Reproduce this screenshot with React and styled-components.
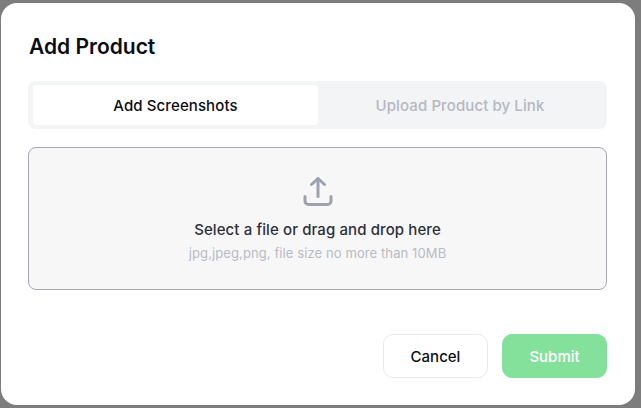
import React, { useState } from "react";
import styled, { createGlobalStyle } from "styled-components";

const GlobalStyle = createGlobalStyle`
  html, body {
    margin: 0;
    padding: 0;
    overflow: hidden;
  }
  * {
    box-sizing: border-box;
  }
`;

const Overlay = styled.div`
  width: 641px;
  height: 408px;
  background: #7d7d7d;
  padding: 3px 6px 3px 1px;
  font-family: Inter, "Liberation Sans", sans-serif;
`;

const Modal = styled.div`
  width: 634px;
  height: 402px;
  background: #fff;
  border-radius: 16px;
  padding: 30px 28px 27px 27px;
  display: flex;
  flex-direction: column;
`;

const Title = styled.h2`
  margin: 0 0 20px 1px;
  font-size: 21px;
  line-height: 28px;
  font-weight: 600;
  color: #0b0d14;
`;

const Tabs = styled.div`
  display: grid;
  grid-template-columns: 285px 1fr;
  height: 48px;
  padding: 4px 5px;
  background: #f3f4f6;
  border-radius: 8px;
`;

const Tab = styled.button`
  border: 0;
  border-radius: 4px;
  font-family: inherit;
  font-size: 15px;
  letter-spacing: 0.1px;
  font-weight: 450;
  background: ${(p) => (p.$active ? "#fff" : "transparent")};
  color: ${(p) => (p.$active ? "#0b0d14" : "#b4b8c2")};
  cursor: pointer;
`;

const DropZone = styled.div`
  margin-top: 18px;
  height: 143px;
  background: #f7f7f8;
  border: 1px solid #a5a7b5;
  border-radius: 8px;
  display: flex;
  flex-direction: column;
  align-items: center;
  padding-top: 27px;
`;

const UploadIcon = styled.svg`
  width: 32px;
  height: 32px;
  color: #9ca3af;
`;

const DropTitle = styled.div`
  margin-top: 13px;
  font-size: 15px;
  letter-spacing: 0.1px;
  line-height: 20px;
  font-weight: 450;
  color: #2d303b;
`;

const DropHint = styled.div`
  margin-top: 5px;
  font-size: 13px;
  letter-spacing: 0.1px;
  line-height: 16px;
  color: #b8bbc4;
`;

const Footer = styled.div`
  margin-top: auto;
  display: flex;
  justify-content: flex-end;
  gap: 14px;
`;

const Button = styled.button`
  width: 105px;
  height: 44px;
  border-radius: 10px;
  font-family: inherit;
  font-size: 15px;
  font-weight: 450;
  cursor: pointer;
  border: 1px solid ${(p) => (p.$primary ? "#84e19b" : "#e8e9ec")};
  background: ${(p) => (p.$primary ? "#84e19b" : "#fff")};
  color: ${(p) => (p.$primary ? "#fff" : "#0b0d14")};
`;

export default function App() {
  const [tab, setTab] = useState("screenshots");

  return (
    <Overlay>
      <GlobalStyle />
      <Modal>
        <Title>Add Product</Title>
        <Tabs>
          <Tab $active={tab === "screenshots"} onClick={() => setTab("screenshots")}>
            Add Screenshots
          </Tab>
          <Tab $active={tab === "link"} onClick={() => setTab("link")}>
            Upload Product by Link
          </Tab>
        </Tabs>
        <DropZone>
          <UploadIcon viewBox="0 0 32 32" fill="none" stroke="currentColor" strokeWidth="3" strokeLinecap="round" strokeLinejoin="round">
            <path d="M16 21.5V3.5" />
            <path d="M9.5 9.5 16 3.5l6.500 6" />
            <path d="M3 21.5V26a3.500 3.500 0 0 0 3.500 3.500h19A3.500 3.500 0 0 0 29 26v-4.500" />
          </UploadIcon>
          <DropTitle>Select a file or drag and drop here</DropTitle>
          <DropHint>jpg,jpeg,png, file size no more than 10MB</DropHint>
        </DropZone>
        <Footer>
          <Button>Cancel</Button>
          <Button $primary>Submit</Button>
        </Footer>
      </Modal>
    </Overlay>
  );
}
